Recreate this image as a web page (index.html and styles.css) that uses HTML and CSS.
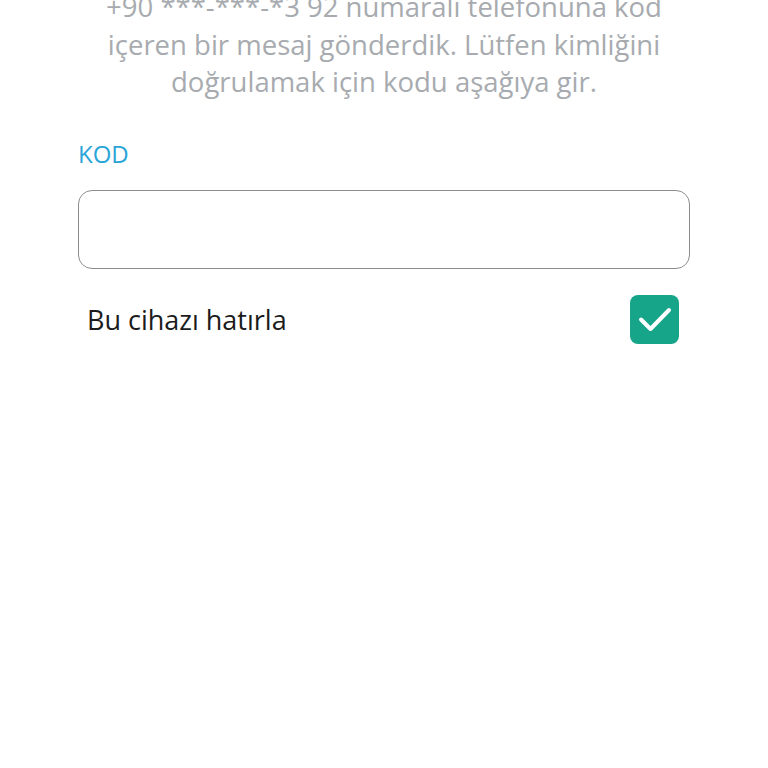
FILE: index.html
```html
<!DOCTYPE html>
<html lang="tr">
<head>
<meta charset="UTF-8" />
<meta name="viewport" content="width=device-width, initial-scale=1" />
<title>Kodu doğrula</title>
<link rel="stylesheet" href="styles.css">
</head>
<body>

<div class="verify">
  <p class="intro">+90 ***-***-*3 92 numaralı telefonuna kod içeren bir mesaj gönderdik. Lütfen kimliğini doğrulamak için kodu aşağıya gir.</p>

  <label class="field-label" for="code">KOD</label>
  <input class="code-input" id="code" type="text" inputmode="numeric" autocomplete="one-time-code">

  <label class="remember">
    <span>Bu cihazı hatırla</span>
    <span class="check">
      <svg width="34" height="26" viewBox="0 0 34 26" fill="none">
        <path d="M3 13.5 L12.5 23 L31 4" stroke="#fff" stroke-width="4" stroke-linecap="round" stroke-linejoin="round"/>
      </svg>
    </span>
  </label>
</div>

</body>
</html>
```

FILE: styles.css
```css
body {
  margin: 0;
  background: #fff;
  font-family: "Open Sans", Lato, sans-serif;
}
.verify {
  width: 612px;
  margin: 0 auto;
}
.intro {
  margin: -12px 0 0;
  padding: 0 10px;
  text-align: center;
  font-size: 27.5px;
  line-height: 37.5px;
  color: #a7abaf;
}
.field-label {
  display: block;
  margin-top: 39px;
  font-size: 24px;
  line-height: 28px;
  color: #2aa5d8;
}
.code-input {
  display: block;
  box-sizing: border-box;
  width: 612px;
  height: 79px;
  margin-top: 22px;
  border: 1px solid #8c8c8c;
  border-radius: 14px;
  outline: none;
  font-size: 26px;
  padding: 0 16px;
}
.remember {
  display: flex;
  align-items: center;
  justify-content: space-between;
  margin-top: 26px;
  padding: 0 11px 0 9px;
  font-size: 27px;
  color: #1b1b1b;
}
.check {
  width: 49px;
  height: 49px;
  border-radius: 8px;
  background: #17a58a;
  display: flex;
  align-items: center;
  justify-content: center;
}
```
